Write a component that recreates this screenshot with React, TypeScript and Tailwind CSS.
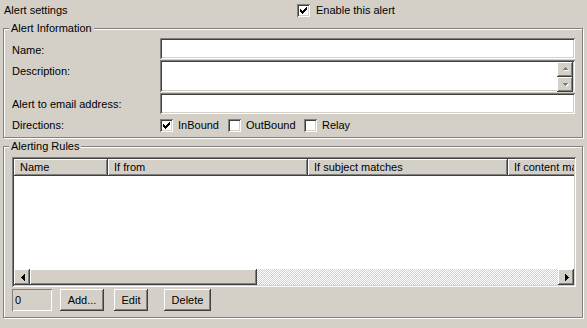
import React from 'react'

const sunken =
  'shadow-[inset_1px_1px_#808080,inset_-1px_-1px_#fff,inset_2px_2px_#404040,inset_-2px_-2px_#d4d0c8]'
const raised =
  'shadow-[inset_-1px_-1px_#404040,inset_1px_1px_#fff,inset_-2px_-2px_#808080]'
const etched =
  'border border-[#808080] shadow-[inset_1px_1px_#fff,1px_1px_#fff]'

function CheckBox({ checked }: { checked?: boolean }) {
  return (
    <span className={`block w-[13px] h-[13px] shrink-0 bg-white ${sunken}`}>
      {checked && (
        <svg width="13" height="13" viewBox="0 0 13 13" shapeRendering="crispEdges">
          <path
            fill="#000"
            d="M3 5h1v3H3z M4 6h1v3H4z M5 7h1v3H5z M6 6h1v3H6z M7 5h1v3H7z M8 4h1v3H8z M9 3h1v3H9z"
          />
        </svg>
      )}
    </span>
  )
}

function Arrow({ dir, disabled }: { dir: 'left' | 'right' | 'up' | 'down'; disabled?: boolean }) {
  const paths: Record<string, string> = {
    left: 'M6 7h1v1H6z M7 6h1v3H7z M8 5h1v5H8z M9 4h1v7H9z',
    right: 'M6 4h1v7H6z M7 5h1v5H7z M8 6h1v3H8z M9 7h1v1H9z',
    up: 'M7 5h1v1H7z M6 6h3v1H6z M5 7h5v1H5z',
    down: 'M5 6h5v1H5z M6 7h3v1H6z M7 8h1v1H7z',
  }
  return (
    <svg width="15" height="15" viewBox="0 0 15 15" shapeRendering="crispEdges">
      {disabled && <path fill="#fff" transform="translate(1 1)" d={paths[dir]} />}
      <path fill={disabled ? '#808080' : '#000'} d={paths[dir]} />
    </svg>
  )
}

function Button({ label, width }: { label: string; width: string }) {
  return (
    <button
      className={`${width} h-[22px] bg-[#d4d0c8] shadow-[inset_-1px_-1px_#404040,inset_1px_1px_#fff,inset_-2px_-2px_#808080] flex items-center justify-center`}
    >
      {label}
    </button>
  )
}

function Field({ h, label, pt, children }: { h: string; label: string; pt: string; children?: React.ReactNode }) {
  return (
    <div className="flex items-start">
      <div className={`w-[148px] ${pt}`}>{label}</div>
      <div className={`relative w-[415px] ${h} bg-white ${sunken}`}>{children}</div>
    </div>
  )
}

export default function App() {
  const columns = [
    { name: 'Name', w: 'w-[94px]' },
    { name: 'If from', w: 'w-[200px]' },
    { name: 'If subject matches', w: 'w-[200px]' },
    { name: 'If content matches', w: 'w-[200px]' },
  ]

  return (
    <div className="w-[587px] h-[328px] overflow-hidden bg-[#d4d0c8] text-black text-[11px] leading-[13px] font-['Liberation_Sans',Arial,sans-serif]">
      {/* header row */}
      <div className="h-[28px] flex items-start pt-[4px] pl-[4px]">
        <span className="w-[293px]">Alert settings</span>
        <label className="flex items-center gap-[6px]">
          <CheckBox checked />
          <span>Enable this alert</span>
        </label>
      </div>

      {/* Alert Information */}
      <div className={`relative ml-[3px] w-[580px] h-[110px] ${etched}`}>
        <span className="absolute -top-[7px] left-[5px] px-[2px] bg-[#d4d0c8]">Alert Information</span>
        <div className="pt-[9px] pl-[8px] flex flex-col">
          <Field h="h-[21px]" label="Name:" pt="pt-[6px]" />
          <div className="mt-[1px]">
            <Field h="h-[32px]" label="Description:" pt="pt-[5px]">
              <div className="absolute right-[2px] top-[2px] bottom-[2px] w-[16px] flex flex-col">
                <div className={`flex-1 bg-[#d4d0c8] ${raised} flex items-center justify-center`}>
                  <Arrow dir="up" disabled />
                </div>
                <div className={`flex-1 bg-[#d4d0c8] ${raised} flex items-center justify-center`}>
                  <Arrow dir="down" disabled />
                </div>
              </div>
            </Field>
          </div>
          <div className="mt-[1px]">
            <Field h="h-[21px]" label="Alert to email address:" pt="pt-[5px]" />
          </div>
          <div className="mt-[5px] flex items-center h-[13px]">
            <div className="w-[148px]">Directions:</div>
            <label className="w-[68px] flex items-center gap-[5px]">
              <CheckBox checked />
              <span>InBound</span>
            </label>
            <label className="w-[76px] flex items-center gap-[5px]">
              <CheckBox />
              <span>OutBound</span>
            </label>
            <label className="flex items-center gap-[5px]">
              <CheckBox />
              <span>Relay</span>
            </label>
          </div>
        </div>
      </div>

      {/* Alerting Rules */}
      <div className={`relative mt-[8px] ml-[3px] w-[580px] h-[172px] ${etched}`}>
        <span className="absolute -top-[7px] left-[5px] px-[2px] bg-[#d4d0c8]">Alerting Rules</span>
        <div className="pt-[10px] pl-[8px]">
          <div className={`w-[564px] h-[130px] p-[2px] bg-white ${sunken}`}>
            <div className="flex flex-col h-full">
              <div className="h-[17px] flex overflow-hidden shrink-0">
                {columns.map((c) => (
                  <div
                    key={c.name}
                    className={`${c.w} shrink-0 h-full bg-[#d4d0c8] ${raised} flex items-center pl-[6px] whitespace-nowrap overflow-hidden`}
                  >
                    {c.name}
                  </div>
                ))}
              </div>
              <div className="flex-1 bg-white" />
              <div className="h-[16px] flex shrink-0">
                <div className={`w-[16px] bg-[#d4d0c8] ${raised} flex items-center justify-center`}>
                  <Arrow dir="left" />
                </div>
                <div className={`w-[227px] bg-[#d4d0c8] ${raised}`} />
                <div className="flex-1 bg-[repeating-conic-gradient(#d4d0c8_0_25%,#ffffff_0_50%)] bg-[length:2px_2px]" />
                <div className={`w-[16px] bg-[#d4d0c8] ${raised} flex items-center justify-center`}>
                  <Arrow dir="right" />
                </div>
              </div>
            </div>
          </div>

          <div className="mt-[2px] flex items-center h-[22px]">
            <div className="w-[40px] h-[22px] shadow-[inset_1px_1px_#808080,inset_-1px_-1px_#fff] flex items-center pl-[3px]">
              0
            </div>
            <div className="ml-[8px]">
              <Button label="Add..." width="w-[44px]" />
            </div>
            <div className="ml-[10px]">
              <Button label="Edit" width="w-[34px]" />
            </div>
            <div className="ml-[16px]">
              <Button label="Delete" width="w-[47px]" />
            </div>
          </div>
        </div>
      </div>
    </div>
  )
}
